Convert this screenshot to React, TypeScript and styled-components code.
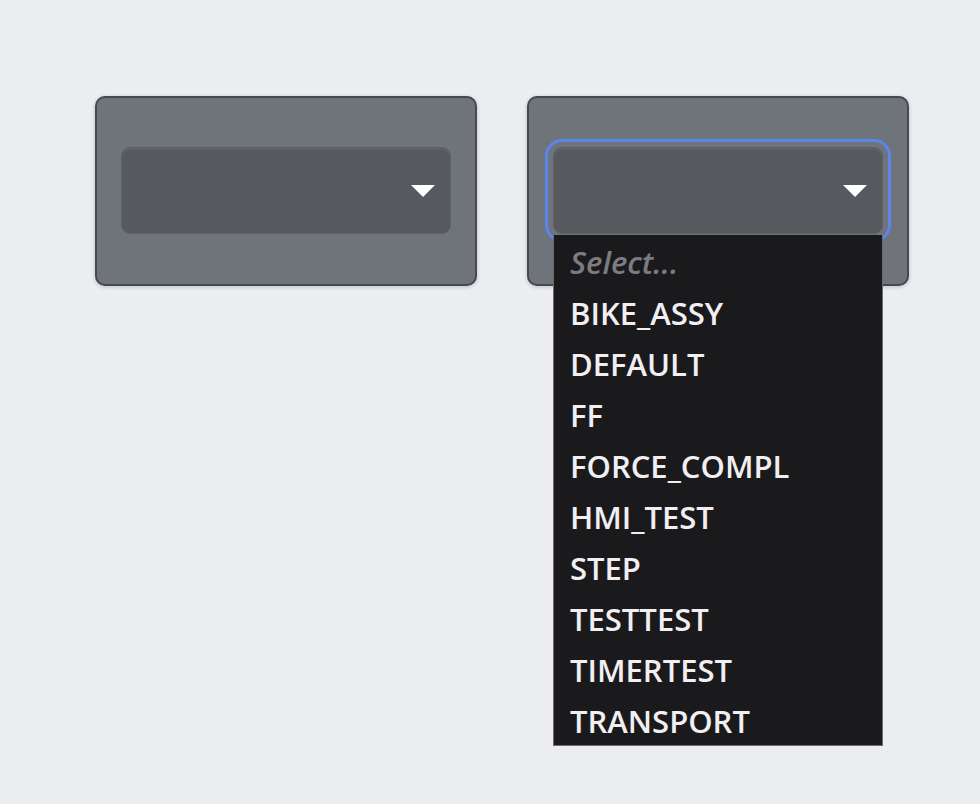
import React from 'react';
import styled, { createGlobalStyle } from 'styled-components';

const options = [
  'BIKE_ASSY',
  'DEFAULT',
  'FF',
  'FORCE_COMPL',
  'HMI_TEST',
  'STEP',
  'TESTTEST',
  'TIMERTEST',
  'TRANSPORT',
];

const GlobalStyle = createGlobalStyle`
  html, body {
    margin: 0;
    padding: 0;
    background: #ebedf0;
    font-family: "Open Sans", "Noto Sans", sans-serif;
  }
`;

const Page = styled.div`
  min-height: 804px;
  box-sizing: border-box;
  padding: 96px 0 0 95px;
  display: flex;
  gap: 50px;
  align-items: flex-start;
`;

const Card = styled.div`
  width: 382px;
  height: 190px;
  box-sizing: border-box;
  padding: 49px 24px 0 24px;
  background: #6f747b;
  border: 2px solid #46494e;
  border-radius: 10px;
  box-shadow: 0 1px 4px rgba(0, 0, 0, 0.2);
`;

const Field = styled.div`
  position: relative;
`;

const SelectBox = styled.div<{ $focused?: boolean }>`
  height: 87px;
  box-sizing: border-box;
  border-radius: 9px;
  background: #56595e;
  border: 1px solid #5e6166;
  box-shadow: inset 0 2px 0 rgba(255, 255, 255, 0.06);
  display: flex;
  align-items: center;
  justify-content: flex-end;
  padding-right: 15px;
  outline: ${({ $focused }) => ($focused ? '3px solid #5a86ee' : 'none')};
  outline-offset: 5px;
`;

const Arrow = styled.span`
  width: 0;
  height: 0;
  border-left: 12px solid transparent;
  border-right: 12px solid transparent;
  border-top: 12px solid #ffffff;
`;

const Menu = styled.ul`
  position: absolute;
  top: calc(100% + 1px);
  left: 0;
  right: 0;
  margin: 0;
  padding: 0;
  list-style: none;
  background: #1a1a1c;
  border: 1px solid #6b6c70;
  border-top: none;
  z-index: 2;
`;

const Option = styled.li<{ $placeholder?: boolean }>`
  height: 51px;
  box-sizing: border-box;
  padding: 4px 0 0 16px;
  line-height: 47px;
  font-size: 31px;
  font-weight: 600;
  white-space: nowrap;
  font-style: ${({ $placeholder }) => ($placeholder ? 'italic' : 'normal')};
  color: ${({ $placeholder }) => ($placeholder ? '#7b7c81' : '#f1eff2')};
`;

const App: React.FC = () => {
  return (
    <>
      <GlobalStyle />
      <Page>
        <Card>
          <Field>
            <SelectBox>
              <Arrow />
            </SelectBox>
          </Field>
        </Card>
        <Card>
          <Field>
            <SelectBox $focused>
              <Arrow />
            </SelectBox>
            <Menu>
              <Option $placeholder>Select...</Option>
              {options.map((opt) => (
                <Option key={opt}>{opt}</Option>
              ))}
            </Menu>
          </Field>
        </Card>
      </Page>
    </>
  );
};

export default App;
